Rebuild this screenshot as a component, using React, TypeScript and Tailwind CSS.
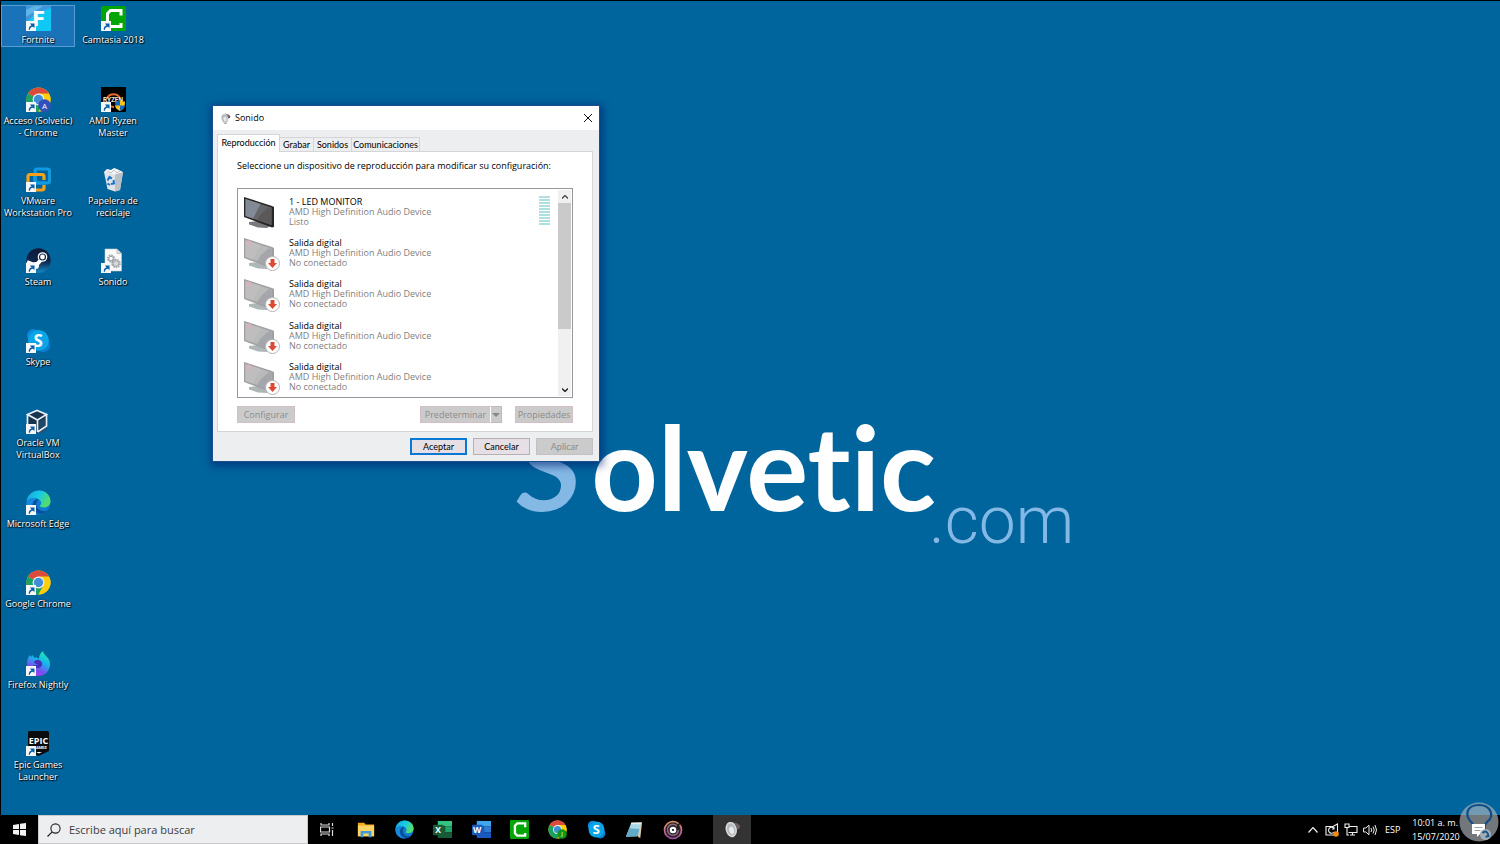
import type { ReactNode } from 'react'

interface IconProps {
  className?: string
}

interface Shortcut {
  label: string
  icon: ReactNode
  linked?: boolean
  selected?: boolean
}

const CamtasiaIcon = ({ className }: IconProps) => (
  <svg viewBox="0 0 25 25" className={className} aria-hidden="true">
    <rect width="25" height="25" rx="1.5" fill="#04a607" />
    <path d="M20 9.500V4.500H9.500L6.500 7.500v10L9.500 20.500H20V17" fill="none" stroke="#fff" strokeWidth="3" />
  </svg>
)

const FortniteIcon = ({ className }: IconProps) => (
  <svg viewBox="0 0 25 25" className={className} aria-hidden="true">
    <rect width="25" height="25" fill="#10c8f4" />
    <path d="M0 0h25v2L9 8 0 17z" fill="#3d97da" />
    <path d="M0 4 8 0h9L0 11z" fill="#62b3e8" />
    <text x="12.500" y="20" textAnchor="middle" fontFamily="Roboto, sans-serif" fontWeight="900" fontSize="21" fill="#fff">F</text>
  </svg>
)

const ChromeIcon = ({ className, badge, color }: IconProps & { badge?: string; color?: string }) => (
  <svg viewBox="0 0 25 25" className={className} aria-hidden="true">
    <circle cx="12.5" cy="12.5" r="12" fill="#ffcd0a" />
    <path d="M12.500 12.500 2.100 6.500A12 12 0 0 1 22.900 6.500z" fill="#db4b3c" />
    <path d="M12.500 6.500H22.900L20 4z" fill="#db4b3c" />
    <path d="M2.100 6.500A12 12 0 0 0 12.500 24.500l5-9-5-3z" fill="#1aa261" />
    <path d="M17.700 15.500 12.500 24.500A12 12 0 0 0 22.900 6.500H12.500z" fill="#ffcd0a" />
    <circle cx="12.500" cy="12.500" r="5.900" fill="#f1f1f1" />
    <circle cx="12.500" cy="12.500" r="4.700" fill="#3f8ed8" />
    {badge && (
      <>
        <circle cx="18.500" cy="18.500" r="6.300" fill={color} />
        <text x="18.500" y="21.500" textAnchor="middle" fontFamily="Open Sans, sans-serif" fontSize="8" fill="#fff">{badge}</text>
      </>
    )}
  </svg>
)

const RyzenIcon = ({ className }: IconProps) => (
  <svg viewBox="0 0 25 25" className={className} aria-hidden="true">
    <rect width="25" height="25" fill="#000" />
    <path d="M6 11A7.500 7.500 0 0 1 19 11M6 14.500A7.500 7.500 0 0 0 13 20" fill="none" stroke="#ec6a1e" strokeWidth="2" />
    <text x="12" y="15" textAnchor="middle" fontFamily="Roboto, sans-serif" fontWeight="700" fontSize="6.500" fill="#e8e8e8">RYZEN</text>
    <path d="M19 13c2 1.500 3 1.500 5 1.500 0 5-1 7.500-5 9.500z" fill="#f6c51c" />
    <path d="M19 13c-2 1.500-3 1.500-5 1.500 0 5 1 7.500 5 9.500z" fill="#1766c0" />
    <path d="M14 18.500h5V24c-3-1.500-4.500-3-5-5.500z" fill="#f6c51c" />
    <path d="M24 18.500h-5V24c3-1.500 4.500-3 5-5.500z" fill="#1766c0" />
  </svg>
)

const VmwareIcon = ({ className }: IconProps) => (
  <svg viewBox="0 0 25 25" className={className} aria-hidden="true">
    <rect x="9" y="2" width="14.500" height="14" rx="2" fill="none" stroke="#129ae0" strokeWidth="3.200" />
    <path d="M18 13V9.500a2 2 0 0 0-2-2H4a2 2 0 0 0-2 2V21a2 2 0 0 0 2 2h12a2 2 0 0 0 2-2v-3" fill="none" stroke="#f9a01b" strokeWidth="3.200" />
    <path d="M9 9v5.500q0 1.500 1.500 1.500H20" fill="none" stroke="#129ae0" strokeWidth="3.200" />
  </svg>
)

const BinIcon = ({ className }: IconProps) => (
  <svg viewBox="0 0 25 25" className={className} aria-hidden="true">
    <path d="M3 5h19l-3 18-5 1.500L6.500 22z" fill="#dfe3e6" />
    <path d="m14 7 8-2-3 18-5 1.500z" fill="#b9c0c6" />
    <path d="m3 5 3-3 4 1 3-2 4 1.500L22 5l-8 2.500z" fill="#f5f7f8" />
    <path d="m6 4 4 2 3-3 3 3 3-2" fill="none" stroke="#a9b0b6" strokeWidth=".8" />
    <path d="M6.500 13.500 8.500 10l2.500 1.500M12.500 13l.5 3.500-3 .5M9 18l-2.500-1.500" fill="none" stroke="#1674d1" strokeWidth="2" />
  </svg>
)

const SteamIcon = ({ className }: IconProps) => (
  <svg viewBox="0 0 25 25" className={className} aria-hidden="true">
    <defs>
      <linearGradient id="steam" x2="0" y2="1">
        <stop stopColor="#0d1a36" />
        <stop offset=".55" stopColor="#10284f" />
        <stop offset="1" stopColor="#1589c4" />
      </linearGradient>
    </defs>
    <circle cx="12.500" cy="12.500" r="12.200" fill="url(#steam)" />
    <path d="m1 14 9 3.500 7-8" fill="none" stroke="#fff" strokeWidth="4" />
    <circle cx="16.500" cy="9" r="4.800" fill="#fff" />
    <circle cx="16.500" cy="9" r="3" fill="#fff" stroke="#14284c" strokeWidth="1.200" />
    <circle cx="9.500" cy="17.500" r="3.500" fill="#fff" />
  </svg>
)

const SettingsFileIcon = ({ className }: IconProps) => (
  <svg viewBox="0 0 25 25" className={className} aria-hidden="true">
    <path d="M4 1h12l4.500 4.500V23H4z" fill="#fafafa" stroke="#c6c6c6" strokeWidth=".6" />
    <path d="M16 1v4.500h4.500" fill="#ddd" stroke="#a5a5a5" strokeWidth=".6" />
    <circle cx="10" cy="10.500" r="3.100" fill="none" stroke="#9fa4a8" strokeWidth="1.800" strokeDasharray="1.600 .8" />
    <circle cx="10" cy="10.500" r="2.200" fill="none" stroke="#9fa4a8" />
    <circle cx="15" cy="15.500" r="3.900" fill="none" stroke="#9fa4a8" strokeWidth="1.800" strokeDasharray="1.600 .8" />
    <circle cx="15" cy="15.500" r="2.800" fill="#d6d9db" stroke="#9fa4a8" />
  </svg>
)

const SkypeIcon = ({ className }: IconProps) => (
  <svg viewBox="0 0 25 25" className={className} aria-hidden="true">
    <circle cx="7.500" cy="7.500" r="6.500" fill="#0f86d8" />
    <circle cx="17.500" cy="17.500" r="6.700" fill="#0b7bd0" />
    <circle cx="12.500" cy="12.500" r="10.500" fill="#0aa5e8" />
    <text x="12.300" y="18.500" textAnchor="middle" fontFamily="Open Sans, sans-serif" fontWeight="700" fontSize="17" fill="#fff">S</text>
  </svg>
)

const VirtualBoxIcon = ({ className }: IconProps) => (
  <svg viewBox="0 0 25 25" className={className} aria-hidden="true">
    <path d="M11 13v12l8-2 2-5z" fill="#28527c" />
    <path d="M1 5.500 11 1l10 4.500V18l-9.500 6L1 18z" fill="#16344d" />
    <path d="M1.500 5.500 11 1.500l9.500 4L11.500 11zM11.500 11v12M1.500 5.500V16M20.500 5.500V17l-9 6" fill="none" stroke="#e7eef5" strokeWidth="1.700" />
    <path d="M13 12.500 19 9v7.500l-6 4z" fill="#1c4a66" />
  </svg>
)

const EdgeIcon = ({ className }: IconProps) => (
  <svg viewBox="0 0 25 25" className={className} aria-hidden="true">
    <defs>
      <linearGradient id="edge-top" x1="0" x2="1" y2=".4">
        <stop stopColor="#13a4dd" />
        <stop offset=".55" stopColor="#18cbe6" />
        <stop offset="1" stopColor="#55dd69" />
      </linearGradient>
    </defs>
    <circle cx="12.500" cy="12.500" r="12" fill="#0e7bd0" />
    <path d="M.6 12C1.500 4.500 7 .5 12.800.5c7 0 11.700 5 11.700 10.500 0 4-3 6.500-6.500 6.500-3 0-4.500-1-4-2 2.500-2 1-6.500-4-7C5.500 8 1.500 9.500.6 12z" fill="url(#edge-top)" />
    <path d="M10 8.500c-3.500 2-4.500 7.500-2 11.500 3 4.500 9 5 14 .5-3 1.200-8 1.200-10.500-2.500-2-3-1.500-6 1-8.500z" fill="#0b4f9c" />
    <path d="M.6 12C2 8 7.500 7 11 9c-4 1-6 5-4.500 9 1 3 3.500 5.500 6.500 6.500C5.500 24.800-.2 18.500.6 12z" fill="#1589dc" />
  </svg>
)

const FirefoxIcon = ({ className }: IconProps) => (
  <svg viewBox="0 0 25 25" className={className} aria-hidden="true">
    <defs>
      <linearGradient id="nightly" x1=".8" x2=".3" y2="1">
        <stop stopColor="#24f0a0" />
        <stop offset=".4" stopColor="#15b7ee" />
        <stop offset=".75" stopColor="#7a4cf0" />
        <stop offset="1" stopColor="#b23bea" />
      </linearGradient>
    </defs>
    <path d="M1 13c0-4 1-7 3-9l1 2 2-2 1 3c2-1 4 0 5 1 0-3 1-6 4-8 0 4 7 6 7 13 0 7-5 12-11.500 12S1 20 1 13z" fill="url(#nightly)" />
    <path d="M8 12c0-3 4-4 6-2.500 3 2 3 6-1 7.500-3 .500-5-1-6-3 2 .5 4 0 5-1-2 0-3-.5-4-1z" fill="#4630bb" />
  </svg>
)

const EpicIcon = ({ className }: IconProps) => (
  <svg viewBox="0 0 25 25" className={className} aria-hidden="true">
    <path d="M3.500 0h18q1.500 0 1.500 1.500V20L12.500 25 2 20V1.500Q2 0 3.500 0z" fill="#0b0b0d" />
    <text x="12.500" y="12.500" textAnchor="middle" fontFamily="Open Sans, sans-serif" fontWeight="700" fontSize="9" fill="#fff">EPIC</text>
    <text x="14" y="18" textAnchor="middle" fontFamily="Roboto, sans-serif" fontWeight="700" fontSize="4" fill="#fff">GAMES</text>
    <path d="M10 21h6l-3 1.500z" fill="#fff" />
  </svg>
)

const OfficeIcon = ({ className, letter, dark, mid, light }: IconProps & { letter: string; dark: string; mid: string; light: string }) => (
  <svg viewBox="0 0 20 20" className={className} aria-hidden="true">
    <path d="M5 1h15v6H5z" fill={light} />
    <path d="M5 7h15v6H5z" fill={mid} />
    <path d="M5 13h15v6H5zM5 6h8v8H5z" fill={dark} />
    <rect y="5" width="11" height="11" rx="1" fill={dark} />
    <text x="5.500" y="13.500" textAnchor="middle" fontFamily="Open Sans, sans-serif" fontWeight="700" fontSize="9" fill="#fff">{letter}</text>
  </svg>
)

const ExplorerIcon = ({ className }: IconProps) => (
  <svg viewBox="0 0 20 20" className={className} aria-hidden="true">
    <path d="M1 2h7l1.500 2H19v13H1z" fill="#f2a91d" />
    <path d="M1 5h18v12H1z" fill="#ffd264" />
    <path d="M4 18v-7h12v7h-3v-4H7v4z" fill="#3f9bd8" />
  </svg>
)

const NotepadIcon = ({ className }: IconProps) => (
  <svg viewBox="0 0 20 20" className={className} aria-hidden="true">
    <path d="m7 2 12-.5L17 19l-2-1z" fill="#d8c8ae" />
    <path d="M7 2h11l-4 15-13 .5z" fill="#a9d9e8" />
    <path d="m5 8 11 1-2 8-13 .5z" fill="#62aac8" />
    <path d="M7 2h11l-.4 1.500H6.500z" fill="#e9f2f5" />
  </svg>
)

const GrooveIcon = ({ className }: IconProps) => (
  <svg viewBox="0 0 20 20" className={className} aria-hidden="true">
    <defs>
      <linearGradient id="groove" x2="0" y2="1">
        <stop stopColor="#e39a60" />
        <stop offset="1" stopColor="#a04ea5" />
      </linearGradient>
    </defs>
    <circle cx="10" cy="10" r="8.500" fill="#2c2030" stroke="url(#groove)" strokeWidth="1.700" />
    <path d="M14.500 6.500A5.500 5.500 0 1 0 15.500 10" fill="none" stroke="#8b6c73" strokeWidth="1.500" />
    <circle cx="10" cy="10" r="2.200" fill="#111" stroke="#fff" strokeWidth="2.200" />
    <path d="m14 7 3-4" stroke="#241a22" strokeWidth="1.500" />
  </svg>
)

const SpeakerIcon = ({ className }: IconProps) => (
  <svg viewBox="0 0 20 20" className={className} aria-hidden="true">
    <path d="m9 1 7 2 3 3-1 3-3 1-3 9-4 1z" fill="#6b625f" />
    <ellipse cx="8.500" cy="10" rx="6.500" ry="9" fill="#dedfe0" transform="rotate(-14 8.500 10)" />
    <ellipse cx="8.500" cy="10" rx="5" ry="7.400" fill="#b4babd" transform="rotate(-14 8.500 10)" />
    <ellipse cx="9" cy="11" rx="2.800" ry="4.500" fill="#e8e9ea" transform="rotate(-14 9 11)" />
  </svg>
)

const shortcuts: Shortcut[] = [
  { label: 'Fortnite', icon: <FortniteIcon className="size-[25px]" />, linked: true, selected: true },
  { label: 'Acceso (Solvetic) - Chrome', icon: <ChromeIcon className="size-[25px]" badge="A" color="#3450b8" />, linked: true },
  { label: 'VMware Workstation Pro', icon: <VmwareIcon className="size-[25px]" />, linked: true },
  { label: 'Steam', icon: <SteamIcon className="size-[25px]" />, linked: true },
  { label: 'Skype', icon: <SkypeIcon className="size-[25px]" />, linked: true },
  { label: 'Oracle VM VirtualBox', icon: <VirtualBoxIcon className="size-[25px]" />, linked: true },
  { label: 'Microsoft Edge', icon: <EdgeIcon className="size-[25px]" />, linked: true },
  { label: 'Google Chrome', icon: <ChromeIcon className="size-[25px]" />, linked: true },
  { label: 'Firefox Nightly', icon: <FirefoxIcon className="size-[25px]" />, linked: true },
  { label: 'Epic Games Launcher', icon: <EpicIcon className="size-[25px]" />, linked: true },
  { label: 'Camtasia 2018', icon: <CamtasiaIcon className="size-[25px]" />, linked: true },
  { label: 'AMD Ryzen Master', icon: <RyzenIcon className="size-[25px]" />, linked: true },
  { label: 'Papelera de reciclaje', icon: <BinIcon className="size-[25px]" /> },
  { label: 'Sonido', icon: <SettingsFileIcon className="size-[25px]" />, linked: true },
]

const devices = [
  { name: '1 - LED MONITOR', status: 'Listo', connected: true },
  { name: 'Salida digital', status: 'No conectado', connected: false },
  { name: 'Salida digital', status: 'No conectado', connected: false },
  { name: 'Salida digital', status: 'No conectado', connected: false },
  { name: 'Salida digital', status: 'No conectado', connected: false },
]

const pinned = [
  { name: 'Explorador de archivos', icon: <ExplorerIcon className="size-[18px]" /> },
  { name: 'Microsoft Edge', icon: <EdgeIcon className="size-[19px]" /> },
  { name: 'Excel', icon: <OfficeIcon className="size-[19px]" letter="X" dark="#185c37" mid="#21a366" light="#33c481" /> },
  { name: 'Word', icon: <OfficeIcon className="size-[19px]" letter="W" dark="#185abd" mid="#2b7cd3" light="#41a5ee" /> },
  { name: 'Camtasia', icon: <CamtasiaIcon className="size-[19px]" /> },
  { name: 'Chrome', icon: <ChromeIcon className="size-[19px]" badge="J" color="#0c9a16" /> },
  { name: 'Skype', icon: <SkypeIcon className="size-[19px]" /> },
  { name: 'Bloc de notas', icon: <NotepadIcon className="size-[18px]" /> },
  { name: 'Groove', icon: <GrooveIcon className="size-[20px]" /> },
]

function DesktopShortcut({ label, icon, linked, selected }: Shortcut) {
  return (
    <div className="pr-px">
      <button
        className={`flex w-full flex-col items-center border text-[9px] leading-3 text-white ${
          selected ? 'border-[#5b9bd3] bg-[#1a72b8]' : 'border-transparent'
        }`}
      >
        <span className="relative">
          {icon}
          {linked && (
            <svg viewBox="0 0 10 10" className="absolute bottom-0 left-0 size-[10px]" aria-hidden="true">
              <rect width="10" height="10" fill="#f4f6f8" />
              <path d="M2.800 8.800C2.500 6.500 3.500 5 5.500 4.500L4 2.500h4.500V7L7 5.700C5 6 3.800 7 4 8.800z" fill="#0b5ea8" />
            </svg>
          )}
        </span>
        <span className="mt-[3px] text-center [text-shadow:1px_1px_1px_#000,0_0_2px_#000]">{label}</span>
      </button>
    </div>
  )
}

function Wallpaper() {
  return (
    <div className="absolute left-[516px] top-[359px] whitespace-nowrap font-['Lato',sans-serif] [font-variant-ligatures:none]">
      <p className="flex items-baseline gap-1.5 font-bold leading-none text-white">
        <span className="text-[170px] font-medium italic text-[#84b9e6]">s</span>
        <span className="text-[116px]">olvetic</span>
      </p>
      <p className="-mt-[42px] ml-[412px] font-['Roboto',sans-serif] text-[66px] font-light leading-none text-[#84b9e6]">.com</p>
    </div>
  )
}

function MonitorIcon({ connected }: { connected: boolean }) {
  return (
    <svg viewBox="0 0 36 34" className="h-[34px] w-[36px] shrink-0" aria-hidden="true">
      <path d="m5 26 10-1 11 5-3 2-9-.5-9-3z" fill={connected ? '#77797c' : '#aeb6b8'} />
      <path d="m0 1 28 9 2 1v20l-2 .5L0 21z" fill={connected ? '#292524' : '#a0a0a2'} />
      <path d="m1.500 3 26 8.500v17.500L1.500 20z" fill={connected ? '#66676a' : '#b7bab9'} />
      <path d="m1.500 3 15 5L9 22.500 1.500 20z" fill={connected ? '#818a96' : '#c0bdbf'} />
      <path d="m17 18 8-7 2.500.7V29L13 24z" fill={connected ? '#5b5858' : '#a5a6ab'} />
      {!connected && (
        <>
          <circle cx="5" cy="6" r="2.500" fill="#d7b3bd" />
          <circle cx="28.500" cy="26.500" r="7" fill="#fff" stroke="#b9b2b2" strokeWidth="1" />
          <path d="M26.500 22h4v4H33l-4.500 5L24 26h2.500z" fill="#dc4a34" />
        </>
      )}
    </svg>
  )
}

function SoundDialog() {
  return (
    <section
      aria-label="Sonido"
      className="absolute left-[211px] top-[104px] flex w-[388px] flex-col border border-[#17508c] bg-[#edeef0] text-[9px] leading-[10px] text-black shadow-[1px_2px_8px_2px_rgba(0,30,110,0.6)]"
    >
      <header className="flex h-6 items-center bg-white px-[7px]">
        <SpeakerIcon className="size-[11px]" />
        <h1 className="ml-1 flex-1">Sonido</h1>
        <button aria-label="Cerrar">
          <svg viewBox="0 0 8 8" className="size-2" aria-hidden="true">
            <path d="m0 0 8 8M8 0 0 8" stroke="#111" />
          </svg>
        </button>
      </header>

      <div className="pb-1.5 pl-1 pr-1.5 pt-1">
        <div role="tablist" className="flex items-end font-['Lato','Open_Sans',sans-serif]">
          <button role="tab" aria-selected="true" className="-mb-px h-[18px] w-[63px] border border-b-0 border-[#d5d5d8] bg-white pb-0.5">
            Reproducción
          </button>
          <button role="tab" className="h-[14px] w-[34px] border-r border-t border-[#d5d5d8]">Grabar</button>
          <button role="tab" className="h-[14px] w-[38px] border-r border-t border-[#d5d5d8]">Sonidos</button>
          <button role="tab" className="h-[14px] w-[68px] border-r border-t border-[#d5d5d8]">Comunicaciones</button>
        </div>

        <div role="tabpanel" className="border border-[#d5d5d8] bg-white px-[19px] pb-2 pt-[9px]">
          <p>Seleccione un dispositivo de reproducción para modificar su configuración:</p>

          <div className="mt-[17px] flex h-[210px] border border-[#94989e] py-px pr-px">
            <ul className="grid flex-1 grid-rows-5">
              {devices.map((d, i) => (
                <li key={i} className="flex items-start pl-1.5 pt-1.5">
                  <MonitorIcon connected={d.connected} />
                  <div className="ml-[9px] flex-1 pt-px">
                    <p>{d.name}</p>
                    <p className="text-[#808080]">AMD High Definition Audio Device</p>
                    <p className="text-[#808080]">{d.status}</p>
                  </div>
                  {d.connected && (
                    <div className="mr-2 flex w-[11px] flex-col gap-px">
                      {Array.from({ length: 10 }, (_, n) => (
                        <span key={n} className="h-0.5 bg-[#b0dfe2]" />
                      ))}
                    </div>
                  )}
                </li>
              ))}
            </ul>
            <div className="flex w-[13px] flex-col bg-[#f0f0f1]">
              <button aria-label="Subir" className="flex h-[13px] items-center justify-center">
                <svg viewBox="0 0 6 4" className="h-1 w-1.5" aria-hidden="true">
                  <path d="m0 3.500 3-3 3 3" fill="none" stroke="#444" strokeWidth="1.300" />
                </svg>
              </button>
              <div className="h-[126px] bg-[#cacaca]" />
              <button aria-label="Bajar" className="mt-auto flex h-[13px] items-center justify-center">
                <svg viewBox="0 0 6 4" className="h-1 w-1.5" aria-hidden="true">
                  <path d="m0 .5 3 3 3-3" fill="none" stroke="#222" strokeWidth="1.300" />
                </svg>
              </button>
            </div>
          </div>

          <div className="mt-2 flex h-[17px] text-[#8b8b8b]">
            <button disabled className="w-[58px] border border-[#d3bfc3] bg-[#cbcbcb]">Configurar</button>
            <button disabled className="ml-auto w-[70px] border border-r-0 border-[#d3bfc3] bg-[#cbcbcb]">Predeterminar</button>
            <button disabled aria-label="Más opciones" className="flex w-[12px] items-center justify-center border border-l-white border-[#c3b9bb] bg-[#cbcbcb]">
              <svg viewBox="0 0 8 4" className="h-1 w-2" aria-hidden="true">
                <path d="M0 0h8L4 4z" fill="#878787" />
              </svg>
            </button>
            <button disabled className="ml-[13px] w-[58px] border border-[#d3bfc3] bg-[#cbcbcb]">Propiedades</button>
          </div>
        </div>

        <div className="mt-1.5 flex h-[17px] justify-end gap-1.5 font-['Lato','Open_Sans',sans-serif]">
          <button className="w-[57px] border-2 border-[#0878d4] bg-[#e7dfe6]">Aceptar</button>
          <button className="w-[57px] border border-[#b4b0b4] bg-[#e7dfe6]">Cancelar</button>
          <button disabled className="w-[57px] border border-[#c3bfc2] bg-[#cbcbcb] text-[#8b8b8b]">Aplicar</button>
        </div>
      </div>
    </section>
  )
}

function Taskbar() {
  return (
    <footer className="relative flex h-[29px] bg-black text-white">
      <button aria-label="Inicio" className="flex w-[38px] items-center justify-center">
        <svg viewBox="0 0 13 13" className="size-[13px]" aria-hidden="true">
          <path d="M0 2 6 1v5H0zM7 .8 13 0v6H7zM0 7h6v5L0 11zM7 7h6v6l-6-.8z" fill="#f2f2f2" />
        </svg>
      </button>
      <label className="flex w-[270px] items-center border border-[#c9c9cc] bg-[#edeef0] pl-2">
        <svg viewBox="0 0 14 14" className="size-[14px] shrink-0" aria-hidden="true">
          <circle cx="8.500" cy="5.500" r="4.600" fill="none" stroke="#222" strokeWidth="1.100" />
          <path d="M5.200 8.800.5 13.500" stroke="#222" strokeWidth="1.200" />
        </svg>
        <input
          type="text"
          aria-label="Buscar"
          placeholder="Escribe aquí para buscar"
          className="ml-2 w-full min-w-0 bg-transparent pt-0.5 text-[11px] outline-none placeholder:text-[#3c3c3c]"
        />
      </label>
      <button aria-label="Vista de tareas" className="flex w-[37px] items-center justify-center">
        <svg viewBox="0 0 14 13" className="h-[13px] w-[14px]" aria-hidden="true">
          <path d="M1 0v2h8V0M1 13v-2h8v2M.500 4h9v5h-9zM12.500 0v3M12.500 7v6M11.500 5h2" fill="none" stroke="#ddd" strokeWidth="1.200" />
        </svg>
      </button>
      <nav aria-label="Aplicaciones" className="ml-0.5 grid w-[345px] grid-cols-9">
        {pinned.map((app) => (
          <button key={app.name} aria-label={app.name} className="flex items-center justify-center">
            {app.icon}
          </button>
        ))}
      </nav>
      <button aria-label="Sonido" className="ml-[21px] flex w-[38px] items-center justify-center bg-[#333]">
        <SpeakerIcon className="size-[17px]" />
      </button>

      <div className="ml-auto flex items-center pr-[42px] text-[9px]">
        <svg viewBox="0 0 10 6" className="h-1.5 w-[10px]" aria-hidden="true">
          <path d="m.5 5.500 4.500-5 4.500 5" fill="none" stroke="#eee" strokeWidth="1.200" />
        </svg>
        <svg viewBox="0 0 14 14" className="ml-[7px] size-[14px]" aria-hidden="true">
          <path d="M1 3.500h7L12.500 1v11H1z" fill="none" stroke="#eee" strokeWidth="1.100" />
          <path d="M9 5.500a3 3 0 1 0 0 3.500M9 4v2H7" fill="none" stroke="#eee" strokeWidth="1.100" />
          <circle cx="11" cy="11" r="2.800" fill="#f58a12" />
        </svg>
        <svg viewBox="0 0 14 13" className="ml-[5px] h-[13px] w-[14px]" aria-hidden="true">
          <path d="M5 3.500h8v6H4.500M8.500 9.500v2.500M6 12h5M1 1h4v3.500H1zM3 4.500V12h2" fill="none" stroke="#eee" strokeWidth="1.100" />
        </svg>
        <svg viewBox="0 0 14 12" className="ml-[5px] h-3 w-[14px]" aria-hidden="true">
          <path d="M.6 4h2.200L6 1.200v9.600L2.800 8H.6zM8 4q1.500 2 0 4M10 2.500q2.500 3.500 0 7M12 1q3 5 0 10" fill="none" stroke="#eee" />
        </svg>
        <span className="ml-2 w-[15px]">ESP</span>
        <time className="ml-3 w-[46px] text-right leading-[14px]">
          <span className="block whitespace-nowrap">10:01 a. m.</span>
          <span className="block">15/07/2020</span>
        </time>
      </div>

      <svg viewBox="0 0 40 40" className="absolute -top-[13px] right-px size-[40px]" aria-label="Notificaciones">
        <circle cx="20" cy="20" r="19.500" fill="#afb7bf" fillOpacity=".65" />
        <path d="M14 22C4 13 8 3 20 3c12 0 16 11 8 17-2 2-3 4-2 8" fill="none" stroke="#0f4c86" strokeWidth="2.200" />
        <path d="M13 22h13v10h-5l-3 3v-3h-5z" fill="#fff" />
        <path d="M15.500 25.500h8M15.500 28.500h6" stroke="#9aa4ad" />
        <circle cx="26.500" cy="32.500" r="5.500" fill="#a5acb3" />
        <path d="M23.500 31q3-3 5 0t-2 4l4-1" fill="none" stroke="#145493" strokeWidth="1.800" />
      </svg>
    </footer>
  )
}

export default function App() {
  return (
    <div className="flex min-h-screen flex-col bg-[#00659d] font-['Open_Sans','Noto_Sans',sans-serif]">
      <main className="relative flex flex-1 border-l border-t border-black">
        <Wallpaper />
        <div className="relative grid auto-cols-[75px] grid-flow-col grid-rows-10 pb-1 pt-1">
          {shortcuts.map((s) => (
            <DesktopShortcut key={s.label} {...s} />
          ))}
        </div>
        <SoundDialog />
      </main>
      <Taskbar />
    </div>
  )
}
